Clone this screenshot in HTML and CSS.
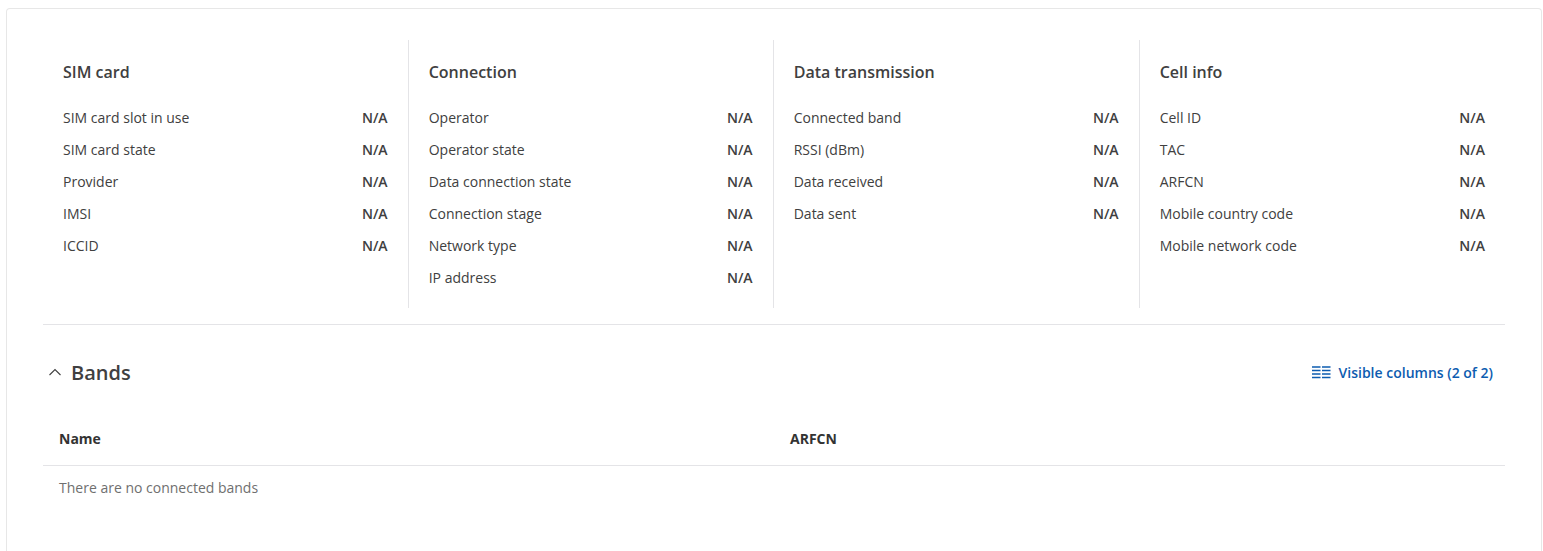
FILE: index.html
```html
<!DOCTYPE html>
<html>
<head>
    <title>Mobile status</title>
    <meta name="viewport" content="width=device-width, initial-scale=1.0">
    <link rel="stylesheet" href="styles.css">
</head>
<body>
    <div class="card">
        <div class="info-grid">
            <div class="info-col">
                <h3>SIM card</h3>
                <div class="info-row"><span>SIM card slot in use</span><b>N/A</b></div>
                <div class="info-row"><span>SIM card state</span><b>N/A</b></div>
                <div class="info-row"><span>Provider</span><b>N/A</b></div>
                <div class="info-row"><span>IMSI</span><b>N/A</b></div>
                <div class="info-row"><span>ICCID</span><b>N/A</b></div>
            </div>
            <div class="info-col">
                <h3>Connection</h3>
                <div class="info-row"><span>Operator</span><b>N/A</b></div>
                <div class="info-row"><span>Operator state</span><b>N/A</b></div>
                <div class="info-row"><span>Data connection state</span><b>N/A</b></div>
                <div class="info-row"><span>Connection stage</span><b>N/A</b></div>
                <div class="info-row"><span>Network type</span><b>N/A</b></div>
                <div class="info-row"><span>IP address</span><b>N/A</b></div>
            </div>
            <div class="info-col">
                <h3>Data transmission</h3>
                <div class="info-row"><span>Connected band</span><b>N/A</b></div>
                <div class="info-row"><span>RSSI (dBm)</span><b>N/A</b></div>
                <div class="info-row"><span>Data received</span><b>N/A</b></div>
                <div class="info-row"><span>Data sent</span><b>N/A</b></div>
            </div>
            <div class="info-col">
                <h3>Cell info</h3>
                <div class="info-row"><span>Cell ID</span><b>N/A</b></div>
                <div class="info-row"><span>TAC</span><b>N/A</b></div>
                <div class="info-row"><span>ARFCN</span><b>N/A</b></div>
                <div class="info-row"><span>Mobile country code</span><b>N/A</b></div>
                <div class="info-row"><span>Mobile network code</span><b>N/A</b></div>
            </div>
        </div>

        <div class="section-head">
            <div class="section-title">
                <svg class="chevron" width="14" height="8" viewBox="0 0 14 8"><path d="M1.5 7 L7 1.5 L12.5 7" fill="none" stroke="#404040" stroke-width="1.1"/></svg>
                <h2>Bands</h2>
            </div>
            <a class="columns-link">
                <svg width="19" height="13" viewBox="0 0 19 13"><path d="M0 1h8.5M0 4.5h8.5M0 8h8.5M0 11.5h8.5M10 1h8.5M10 4.5h8.5M10 8h8.5M10 11.5h8.5" stroke="#0d5cb0" stroke-width="1.4"/></svg>
                Visible columns (2 of 2)
            </a>
        </div>

        <div class="table-head">
            <div>Name</div>
            <div>ARFCN</div>
        </div>
        <div class="table-empty">There are no connected bands</div>
    </div>
</body>
</html>
```

FILE: styles.css
```css
html, body {
    height: 551px;
    overflow: hidden;
}
body {
    margin: 0;
    background: #fff;
    font-family: "Open Sans", sans-serif;
    font-size: 14px;
    color: #404040;
}
.card {
    margin: 8px 1px 0 6px;
    height: 543px;
    box-sizing: border-box;
    border: 1px solid #e7e7e7;
    border-bottom: none;
    border-radius: 4px 4px 0 0;
    padding: 31px 36px 0;
}
.info-grid {
    display: grid;
    grid-template-columns: 365px 365px 366px 1fr;
    height: 285px;
    box-sizing: border-box;
    border-bottom: 1px solid #e4e4e7;
}
.info-col {
    height: 268px;
    box-sizing: border-box;
    padding: 0 20.4px 0 19.7px;
    border-left: 1px solid #e4e4e7;
}
.info-col:first-child {
    padding-left: 20px;
    border-left: none;
}
.info-col:last-child {
    padding-right: 20px;
}
.info-col h3 {
    margin: 0;
    padding: 21px 0 19px;
    font-size: 16px;
    line-height: 22px;
    font-weight: 600;
    color: #404040;
}
.info-row {
    display: flex;
    justify-content: space-between;
    height: 32px;
    line-height: 32px;
}
.info-row b {
    font-weight: 600;
}
.section-head {
    display: flex;
    justify-content: space-between;
    align-items: center;
    height: 96px;
    box-sizing: border-box;
    padding: 0 12px 2px 5px;
}
.section-title {
    display: flex;
    align-items: center;
    gap: 9px;
}
.section-title h2 {
    margin: 0;
    font-size: 20px;
    font-weight: 600;
    color: #404040;
}
.columns-link {
    display: flex;
    align-items: center;
    gap: 8px;
    font-weight: 600;
    color: #0d5cb0;
}
.table-head {
    display: grid;
    grid-template-columns: 731px 1fr;
    height: 45px;
    box-sizing: border-box;
    line-height: 36px;
    padding: 0 16px;
    font-weight: 700;
    color: #333;
    border-bottom: 1px solid #e4e4e7;
}
.table-empty {
    padding: 0 16px;
    line-height: 44px;
    color: #6f6f6f;
}
```
